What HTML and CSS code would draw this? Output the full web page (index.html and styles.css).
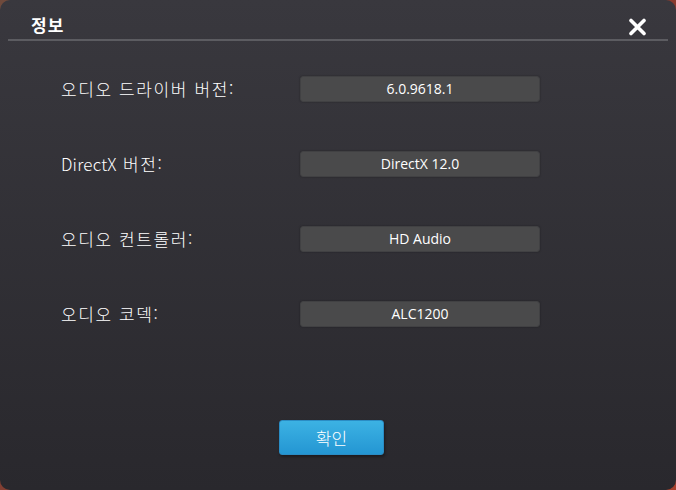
FILE: index.html
```html
<!DOCTYPE html>
<html lang="ko">
<head>
  <meta charset="UTF-8">
  <title>정보</title>
  <link rel="stylesheet" href="styles.css">
</head>
<body>
  <div class="dialog">
    <div class="header">
      <span class="title">정보</span>
      <button class="close" aria-label="닫기">
        <svg width="19" height="18" viewBox="0 0 19 18">
          <path d="M3 2.5 L16 15.5 M16 2.5 L3 15.5" stroke="#fff" stroke-width="3.6" stroke-linecap="round"/>
        </svg>
      </button>
    </div>

    <div class="rows">
      <div class="row">
        <span class="label">오디오 드라이버 버전:</span>
        <span class="value">6.0.9618.1</span>
      </div>
      <div class="row">
        <span class="label"><span class="latin">DirectX</span> 버전:</span>
        <span class="value">DirectX 12.0</span>
      </div>
      <div class="row">
        <span class="label">오디오 컨트롤러:</span>
        <span class="value">HD Audio</span>
      </div>
      <div class="row">
        <span class="label">오디오 코덱:</span>
        <span class="value">ALC1200</span>
      </div>
    </div>

    <div class="footer">
      <button class="ok">확인</button>
    </div>
  </div>
</body>
</html>
```

FILE: styles.css
```css
html, body {
  margin: 0;
  padding: 0;
  height: 100%;
}
body {
  background: linear-gradient(135deg, #6f4a3c, #8a3a2e 60%, #a6402c);
  font-family: "Noto Sans CJK KR", "Noto Sans", sans-serif;
  color: #fff;
}
.dialog {
  height: 490px;
  display: flex;
  flex-direction: column;
  background: linear-gradient(to bottom, #39383e, #29282d);
  border-radius: 10px;
  overflow: hidden;
}
.header {
  height: 39px;
  margin: 0 8px;
  padding: 0 21px 0 23px;
  display: flex;
  justify-content: space-between;
  align-items: flex-start;
  border-bottom: 2px solid #5c5c61;
}
.title {
  padding-top: 15px;
  font-size: 17px;
  line-height: 20px;
  font-weight: bold;
  letter-spacing: 1px;
}
.close {
  margin-top: 18px;
  padding: 0;
  border: none;
  background: none;
  line-height: 0;
  cursor: pointer;
}
.rows {
  margin-top: 35px;
  display: flex;
  flex-direction: column;
  gap: 49px;
}
.row {
  display: grid;
  grid-template-columns: 300px 240px;
  align-items: center;
}
.label {
  padding-left: 61px;
  font-size: 17px;
  font-weight: 300;
  letter-spacing: 1.6px;
  line-height: 20px;
}
.latin {
  letter-spacing: 0.2px;
}
.value {
  height: 24px;
  line-height: 24px;
  text-align: center;
  font-family: "Open Sans", sans-serif;
  font-size: 14px;
  background: #4a4a4b;
  border: 1px solid #414143;
  border-radius: 3px;
  box-shadow: 0 0 2px rgba(0, 0, 0, 0.35);
}
.footer {
  margin-top: auto;
  padding: 0 0 35px 279px;
  display: flex;
}
.ok {
  width: 105px;
  height: 35px;
  padding: 0;
  color: #fff;
  font-family: "Noto Sans CJK KR", sans-serif;
  font-size: 17px;
  font-weight: 300;
  background: linear-gradient(to bottom, #3cb2e3, #2496d3);
  border: 1px solid #2a8cc4;
  border-radius: 3px;
  box-shadow: 1px 2px 3px rgba(0, 0, 0, 0.35);
  cursor: pointer;
}
```
